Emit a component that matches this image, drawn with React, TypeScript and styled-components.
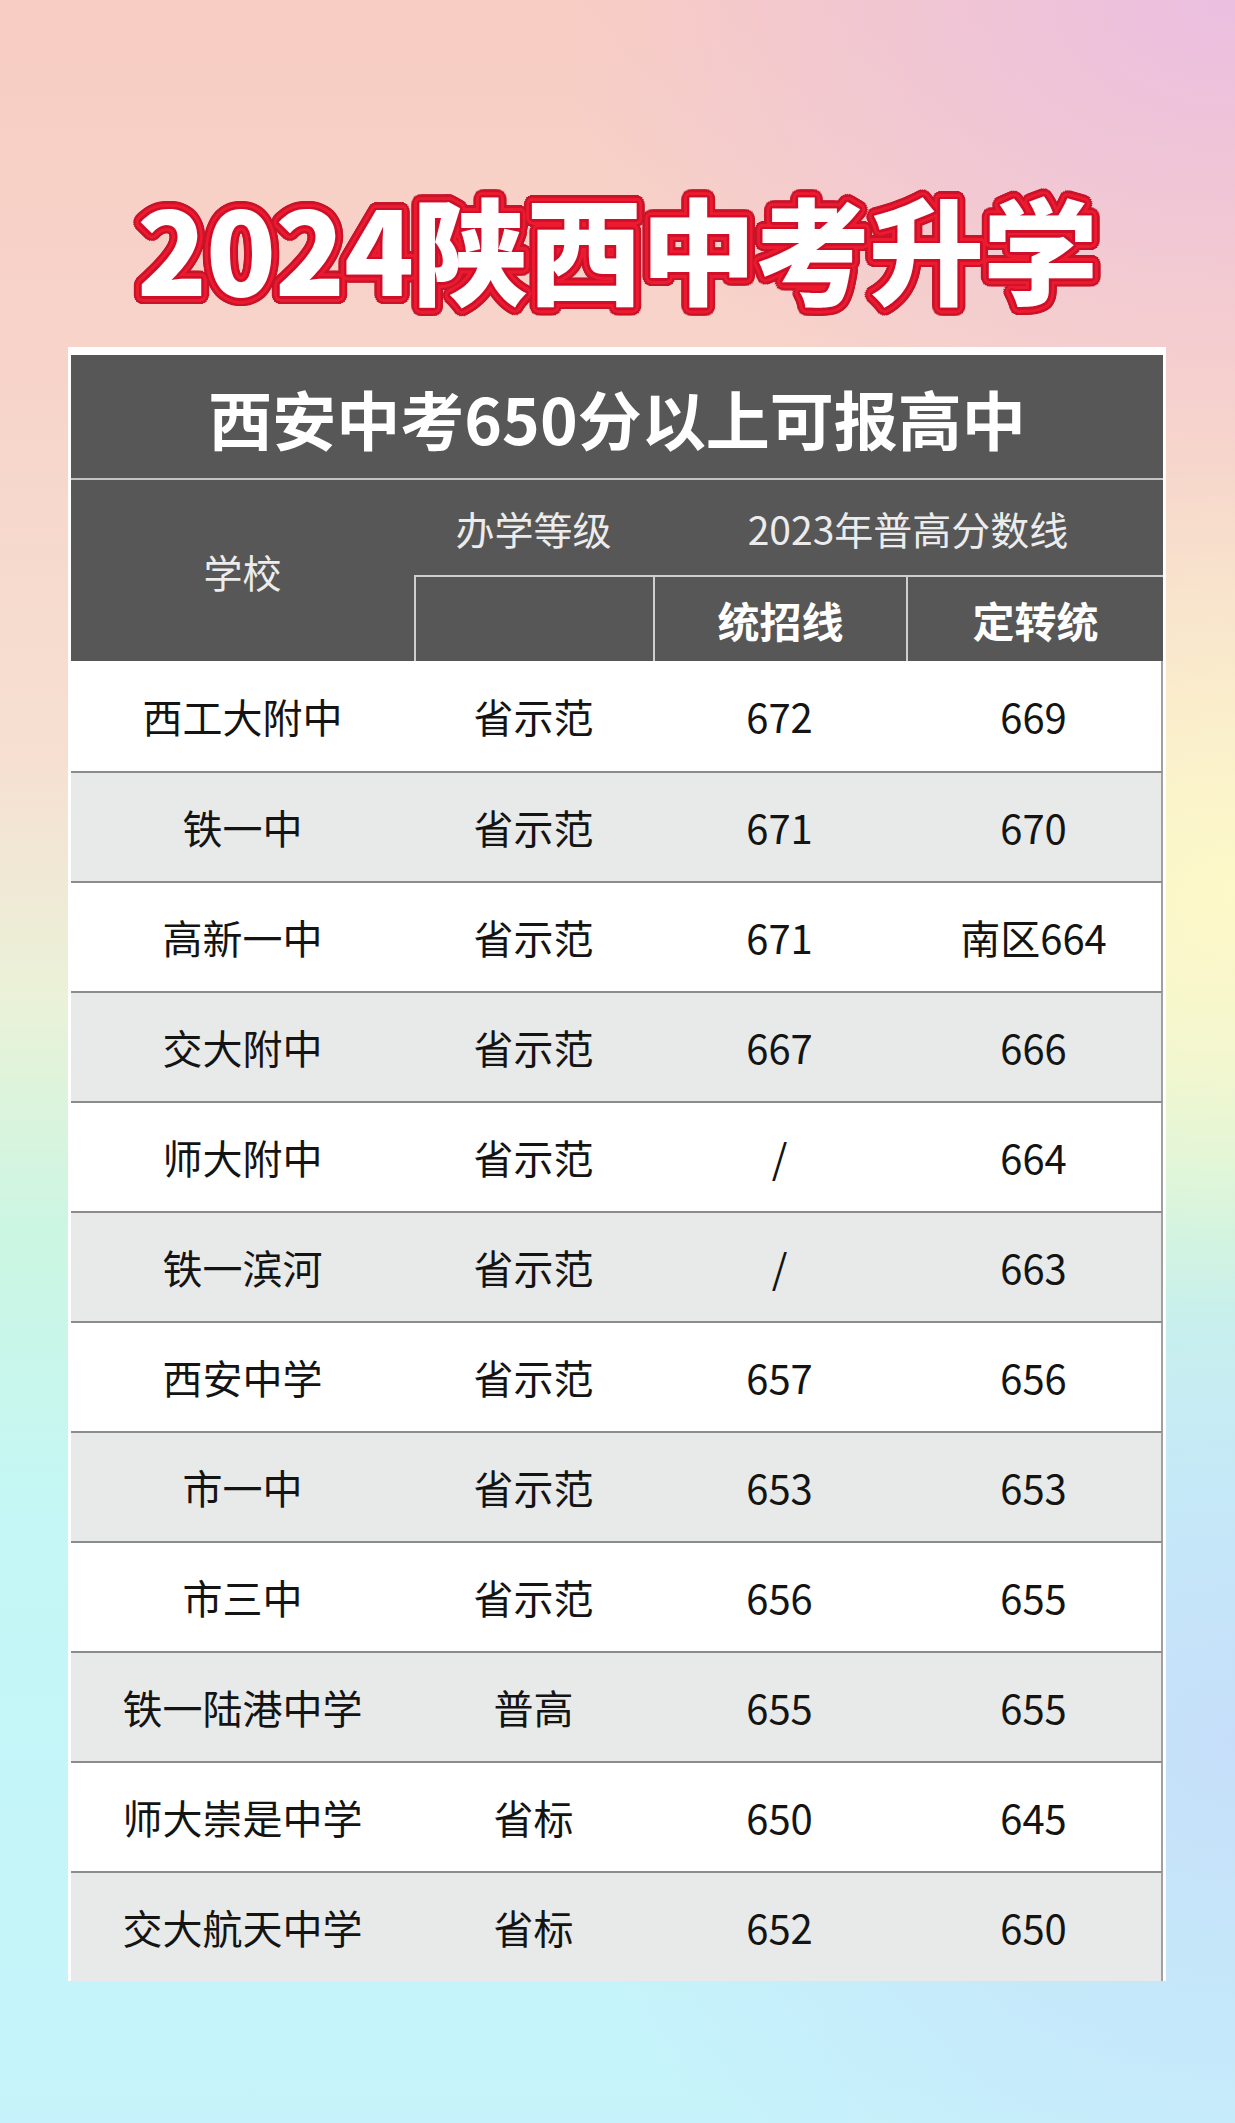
import React from 'react';
import styled, { createGlobalStyle } from 'styled-components';

const GlobalStyle = createGlobalStyle`
  html, body {
    margin: 0;
    padding: 0;
  }
  body {
    font-family: "Noto Sans CJK SC", "Noto Sans", sans-serif;
  }
`;

// ring of shadows to fake a thick outline round the title
const ring = (r: number, color: string) =>
  Array.from({ length: 24 }, (_, i) => {
    const a = (i / 24) * Math.PI * 2;
    return `${(Math.cos(a) * r).toFixed(1)}px ${(Math.sin(a) * r).toFixed(1)}px 0 ${color}`;
  }).join(', ');

const titleShadow = [ring(2.5, '#d0102a'), ring(5.5, '#ec1b30'), ring(8, '#c8142a')].join(', ');

const Page = styled.div`
  min-height: 2123px;
  box-sizing: border-box;
  padding: 0 69px 0 68px;
  background:
    radial-gradient(ellipse 55% 22% at 100% 0%, rgba(234, 190, 226, 0.95), rgba(234, 190, 226, 0)),
    radial-gradient(ellipse 40% 20% at 100% 42%, rgba(253, 249, 200, 1), rgba(253, 249, 200, 0)),
    radial-gradient(ellipse 55% 28% at 100% 82%, rgba(198, 222, 250, 1), rgba(198, 222, 250, 0)),
    linear-gradient(180deg, #f8cdc3 0%, #f7d4ca 18%, #f6e0d2 36%, #eaf2d8 47%, #cbf6e2 58%, #c4f7f6 72%, #c6f3fb 100%);
`;

const Title = styled.h1`
  margin: 0;
  height: 347px;
  box-sizing: border-box;
  padding-top: 189px;
  text-align: center;
  font-size: 115px;
  line-height: 1;
  font-weight: 900;
  letter-spacing: -1px;
  color: #ffffff;
  text-shadow: ${titleShadow};
`;

const Table = styled.div`
  border-top: 8px solid #ffffff;
  border-left: 3px solid #ffffff;
  border-right: 3px solid #ffffff;
`;

const Caption = styled.div`
  height: 123px;
  display: flex;
  align-items: center;
  justify-content: center;
  background: #575757;
  border-bottom: 2px solid #c4c4c4;
  color: #ffffff;
  font-size: 64px;
  font-weight: 700;
`;

const HeadGrid = styled.div`
  display: grid;
  grid-template-columns: 343px 239px 253px 1fr;
  grid-template-rows: 95px 86px;
  background: #575757;
`;

const HeadCell = styled.div<{ $bold?: boolean; $line?: boolean }>`
  display: flex;
  align-items: center;
  justify-content: center;
  color: ${(p) => (p.$bold ? '#ffffff' : '#ececec')};
  font-size: ${(p) => (p.$bold ? '42px' : '39px')};
  font-weight: ${(p) => (p.$bold ? 700 : 400)};
  border-top: ${(p) => (p.$line ? '2px solid #cfcfcf' : 'none')};
  border-left: ${(p) => (p.$line ? '2px solid #cfcfcf' : 'none')};
`;

const Row = styled.div<{ $shade: boolean; $first: boolean }>`
  display: grid;
  grid-template-columns: 343px 239px 253px 1fr;
  height: 110px;
  box-sizing: border-box;
  background: ${(p) => (p.$shade ? '#e8eaea' : '#ffffff')};
  border-top: ${(p) => (p.$first ? 'none' : '2px solid #8c8c8c')};
  border-right: 2px solid #a0a0a0;
`;

const Cell = styled.div`
  display: flex;
  align-items: center;
  justify-content: center;
  color: #141414;
  font-size: 40px;
`;

const rows = [
  ['西工大附中', '省示范', '672', '669'],
  ['铁一中', '省示范', '671', '670'],
  ['高新一中', '省示范', '671', '南区664'],
  ['交大附中', '省示范', '667', '666'],
  ['师大附中', '省示范', '/', '664'],
  ['铁一滨河', '省示范', '/', '663'],
  ['西安中学', '省示范', '657', '656'],
  ['市一中', '省示范', '653', '653'],
  ['市三中', '省示范', '656', '655'],
  ['铁一陆港中学', '普高', '655', '655'],
  ['师大崇是中学', '省标', '650', '645'],
  ['交大航天中学', '省标', '652', '650'],
];

export default function App() {
  return (
    <Page>
      <GlobalStyle />
      <Title>2024陕西中考升学</Title>
      <Table>
        <Caption>西安中考650分以上可报高中</Caption>
        <HeadGrid>
          <HeadCell style={{ gridRow: '1 / 3' }}>学校</HeadCell>
          <HeadCell>办学等级</HeadCell>
          <HeadCell style={{ gridColumn: '3 / 5' }}>2023年普高分数线</HeadCell>
          <HeadCell $line />
          <HeadCell $line $bold>统招线</HeadCell>
          <HeadCell $line $bold>定转统</HeadCell>
        </HeadGrid>
        {rows.map((r, i) => (
          <Row key={i} $shade={i % 2 === 1} $first={i === 0}>
            {r.map((c, j) => (
              <Cell key={j}>{c}</Cell>
            ))}
          </Row>
        ))}
      </Table>
    </Page>
  );
}
